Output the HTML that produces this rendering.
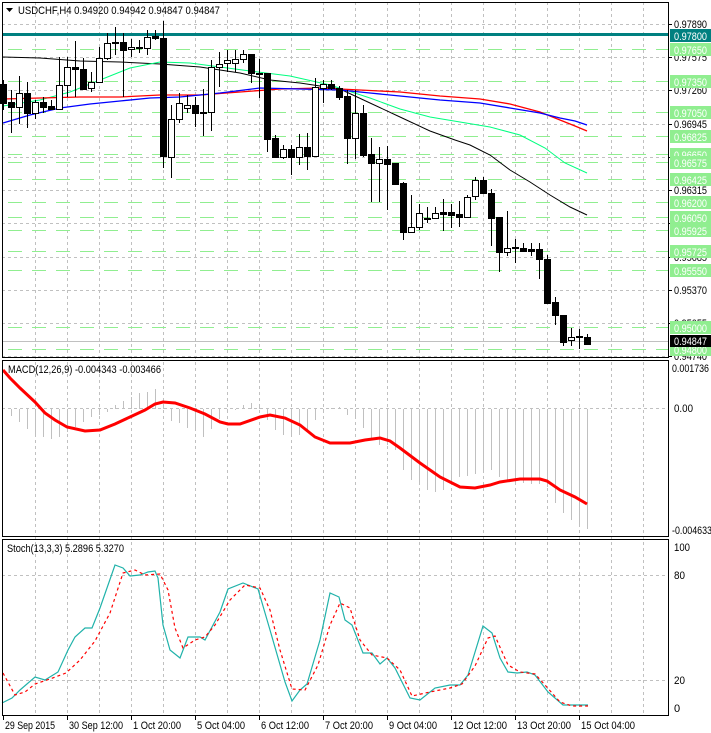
<!DOCTYPE html>
<html><head><meta charset="utf-8"><style>
html,body{margin:0;padding:0;background:#fff;width:711px;height:733px;overflow:hidden}
svg{display:block;font-family:"Liberation Sans",sans-serif;font-size:11px}
</style></head><body>
<svg id="s" width="711" height="733" viewBox="0 0 711 733" xmlns="http://www.w3.org/2000/svg"></svg>
<script>
var o=[];function a(s){o.push(s)}
a('<rect x="0" y="0" width="711" height="733" fill="#fff"/>');
for(var x=35;x<668;x+=32){a('<line x1="'+(x+.5)+'" y1="2" x2="'+(x+.5)+'" y2="715" stroke="#c0c0c0" stroke-dasharray="3,3"/>')}
var hg=[[24,'0.97890'],[57,'0.97575'],[90,'0.97260'],[124,'0.96945'],[157,'0.96630'],[190,'0.96315'],[223,'0.96000'],[257,'0.95685'],[290,'0.95370'],[323,'0.95055'],[356,'0.94740']];
hg.forEach(function(g){a('<line x1="2" y1="'+(g[0]+.5)+'" x2="668" y2="'+(g[0]+.5)+'" stroke="#c0c0c0" stroke-dasharray="3,3"/>')});
var gl=[[49,'0.97650'],[81,'0.97350'],[112,'0.97050'],[136,'0.96825'],[154,'0.96650'],[162,'0.96575'],[179,'0.96425'],[202,'0.96200'],[217,'0.96050'],[230,'0.95925'],[251,'0.95725'],[270,'0.95550'],[327,'0.95000'],[349,'0.94800']];
gl.forEach(function(g){a('<line x1="8" y1="'+(g[0]+.5)+'" x2="668" y2="'+(g[0]+.5)+'" stroke="#90ee90" stroke-dasharray="14,10"/>')});
a('<line x1="2" y1="341.5" x2="668" y2="341.5" stroke="#c0c0c0"/>');
a('<rect x="2" y="33" width="666" height="3" fill="#008080"/>');
function pl(p,c,w,d){a('<polyline fill="none" stroke="'+c+'" stroke-width="'+w+'"'+(d?' stroke-dasharray="'+d+'"':'')+' points="'+p+'"/>')}
pl('3,57 40,58 80,61 120,62 160,64 200,67 240,73 270,80 300,83 340,89 370,103 400,117 430,131 455,140 470,145 490,155 510,170 530,182 550,195 570,207 587,215','#000',1);
pl('3,106 40,100 70,92 100,80 130,68 160,62 190,63 220,67 250,71 290,76 330,85 370,98 400,109 430,117 460,122 490,127 520,135 545,148 565,163 587,173','#00ff7f',1);
pl('3,99 40,98 80,97 120,97 160,95 200,95 240,92 280,89 320,88 360,90 400,92 440,96 480,99 510,104 540,112 560,120 575,126 587,131','#ff0000',1.3);
pl('3,123 30,115 60,108 90,104 120,101 150,98 180,97 220,93 260,88 300,89 340,90 370,93 400,96 440,100 480,103 510,108 540,113 560,118 575,121 587,125','#0000ff',1.3);
var c=[['b',84,103,80,110],['b',102,107,90,133],['w',93,107,76,124],['b',93,113,82,128],['w',102,113,100,119],['b',102,107,97,113],['b',106,109,100,110],['w',85,109,57,110],['w',67,85,57,97],['b',67,69,41,97],['b',69,89,58,89],['w',82,88,72,92],['w',58,82,47,83],['w',43,58,33,60],['b',42,43,27,55],['b',42,50,33,97],['w',47,49,39,57],['b',47,48,40,53],['w',37,48,30,55],['b',36,38,30,40],['b',38,156,21,168],['w',119,157,105,178],['w',103,119,93,123],['w',105,108,95,113],['b',105,113,97,127],['b',112,113,89,136],['w',67,112,60,131],['w',64,67,52,87],['w',60,63,50,72],['w',59,63,50,72],
['w',54,59,50,63],['b',54,73,54,83],['b',73,74,59,98],['b',73,139,73,152],['b',138,157,135,157],['w',149,157,145,159],['b',149,157,145,175],['w',147,157,134,165],['b',147,156,133,170],['w',87,156,78,157],['w',84,88,80,103],['b',84,88,80,90],['b',88,97,86,100],['b',96,138,90,164],['w',113,138,90,159],['b',113,155,105,157],['b',154,163,138,202],['w',159,163,147,202],['b',159,164,146,210],['b',163,184,163,184],['b',183,232,182,240],['w',227,232,195,232],['w',213,227,204,230],['b',218,219,207,223],['w',213,218,207,218],['b',212,214,199,231],['b',212,215,204,228],['b',214,217,201,227],['w',197,217,195,217],['w',180,196,177,200],['b',180,193,177,193],['b',193,218,189,246],['b',217,252,217,272],['w',248,252,211,256],['b',247,248,239,263],['b',248,251,243,251],['b',249,251,243,256],['b',249,259,243,279],['b',259,303,255,303],['b',302,315,297,325],['b',315,342,315,346],['w',337,340,328,346],['b',336,337,329,349],['b',337,344,334,344]];
c.forEach(function(d,k){var x=3+8*k;
a('<line x1="'+(x+.5)+'" y1="'+d[3]+'" x2="'+(x+.5)+'" y2="'+d[4]+'" stroke="#000"/>');
var h=Math.max(d[2]-d[1],1);
if(d[0]=='b')a('<rect x="'+(x-3)+'" y="'+d[1]+'" width="7" height="'+(h+1)+'" fill="#000"/>');
else a('<rect x="'+(x-2.5)+'" y="'+(d[1]+.5)+'" width="6" height="'+h+'" fill="#fff" stroke="#000"/>');});
a('<line x1="2" y1="408.5" x2="668" y2="408.5" stroke="#c0c0c0" stroke-dasharray="3,3"/>');
a('<line x1="2" y1="575.5" x2="668" y2="575.5" stroke="#c0c0c0" stroke-dasharray="3,3"/>');
a('<line x1="2" y1="680.5" x2="668" y2="680.5" stroke="#c0c0c0" stroke-dasharray="3,3"/>');
var hv=[409,416,422,429,434,437,439,437,432,427,422,417,415,412,405,401,397,393,392,389,407,421,423,428,429,437,429,419,413,410,405,403,405,420,430,435,436,435,432,420,412,408,407,415,418,428,440,445,445,450,470,480,485,490,492,490,485,477,476,474,472,470,477,480,482,483,484,484,487,503,513,520,527,529];
hv.forEach(function(v,k){var x=3+8*k+.5;a('<line x1="'+x+'" y1="409" x2="'+x+'" y2="'+v+'" stroke="#c0c0c0"/>')});
pl('3,370 10,378 20,388 35,402 45,413 55,420 67,427 85,431 100,430 115,424 130,417 145,410 155,404 163,402 175,403 190,408 205,414 220,422 228,424 240,424 260,417 270,415 285,418 300,425 315,437 330,443 350,443 365,440 380,438 390,441 400,448 420,463 440,477 460,487 475,488 490,485 500,482 520,479 540,479 547,481 560,490 575,497 587,504','#ff0000',3);
var sm=[[2,703],[12,698],[20,690],[35,677],[45,680],[58,672],[68,650],[75,637],[85,628],[92,628],[100,608],[115,565],[123,568],[130,576],[140,575],[148,572],[155,571],[158,578],[163,625],[170,650],[180,658],[188,637],[200,637],[205,640],[220,612],[228,589],[243,583],[258,589],[270,630],[285,682],[292,701],[300,690],[307,684],[320,640],[330,593],[339,597],[345,620],[352,625],[363,653],[372,653],[380,664],[387,658],[395,668],[410,698],[420,700],[435,688],[450,685],[460,685],[468,675],[483,626],[492,633],[500,658],[508,672],[517,673],[527,672],[535,675],[548,692],[563,705],[588,705]];
pl(sm.map(function(p){return p.join(',')}).join(' '),'#20b2aa',1.2);
var ss=[[3,673],[15,695],[25,692],[35,684],[50,679],[66,673],[80,660],[95,641],[110,613],[123,573],[135,570],[145,575],[160,574],[168,590],[175,628],[183,648],[195,640],[205,637],[215,625],[230,600],[245,585],[260,588],[270,610],[280,650],[292,689],[305,690],[318,665],[330,625],[340,603],[350,608],[360,640],[372,655],[387,658],[400,670],[412,696],[430,692],[450,688],[462,684],[475,666],[488,638],[495,636],[508,665],[520,672],[535,674],[545,685],[560,702],[572,706],[588,706]];
pl(ss.map(function(p){return p.join(',')}).join(' '),'#ff0000',1.2,'3,3');
a('<rect x="2.5" y="2.5" width="666" height="355" fill="none" stroke="#000"/>');
a('<rect x="2.5" y="360.5" width="666" height="176" fill="none" stroke="#000"/>');
a('<rect x="2.5" y="539.5" width="666" height="176" fill="none" stroke="#000"/>');
function t(x,y,s,f,L){a('<text x="'+x+'" y="'+y+'" fill="'+(f||'#000')+'"'+(L?' textLength="'+L+'" lengthAdjust="spacingAndGlyphs"':'')+'>'+s+'</text>')}
hg.forEach(function(g){a('<line x1="668" y1="'+(g[0]+.5)+'" x2="672" y2="'+(g[0]+.5)+'" stroke="#000"/>');t(674,g[0]+4,g[1],0,33)});
gl.forEach(function(g){a('<rect x="670" y="'+(g[0]-6)+'" width="41" height="13" fill="#90ee90"/>');t(674,g[0]+5,g[1],'#fff',33)});
a('<rect x="670" y="29" width="41" height="13" fill="#008080"/>');t(674,40,'0.97800','#fff',33);
a('<rect x="670" y="335" width="41" height="12" fill="#000"/>');t(674,345,'0.94847','#fff',33);
t(672,372,'0.001736',0,37);t(674,412,'0.00',0,19);t(672,534,'-0.004633',0,40);
t(674,551,'100',0,16);t(674,579,'80',0,11);t(674,684,'20',0,11);t(674,712,'0');
var tl=[['29 Sep 2015',50],['30 Sep 12:00',54],['1 Oct 20:00',48],['5 Oct 04:00',48],['6 Oct 12:00',48],['7 Oct 20:00',48],['9 Oct 04:00',48],['12 Oct 12:00',54],['13 Oct 20:00',54],['15 Oct 04:00',54]];
tl.forEach(function(s,i){var x=3+64*i;a('<line x1="'+(x+.5)+'" y1="715" x2="'+(x+.5)+'" y2="720" stroke="#000"/>');t(x+2,729,s[0],0,s[1])});
a('<polygon points="6,8 13,8 9.5,12" fill="#000"/>');
t(18,14,'USDCHF,H4  0.94920 0.94942 0.94847 0.94847',0,202);
t(8,373,'MACD(12,26,9) -0.004343 -0.003466',0,153);
t(7,552,'Stoch(13,3,3) 5.2896 5.3270',0,117);
document.getElementById('s').innerHTML=o.join('');
</script>
</body></html>
